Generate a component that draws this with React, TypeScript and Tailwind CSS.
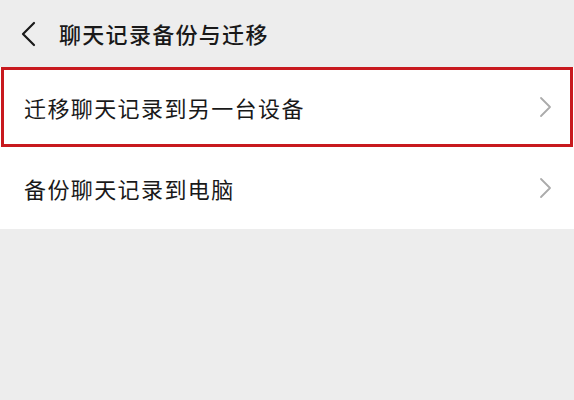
const rows = [
    { label: "迁移聊天记录到另一台设备", active: true },
    { label: "备份聊天记录到电脑", active: false },
];

function BackArrow() {
    return (
        <svg width="16" height="26" viewBox="0 0 16 26" className="ml-[20px]">
            <polyline points="14,2 3,13 14,24" fill="none" stroke="#1a1a1a" strokeWidth="2.2" strokeLinecap="round" strokeLinejoin="round" />
        </svg>
    );
}

function Arrow() {
    return (
        <svg width="14" height="22" viewBox="0 0 14 22">
            <polyline points="2,2 11,11 2,20" fill="none" stroke="#ababab" strokeWidth="1.8" strokeLinecap="round" strokeLinejoin="round" />
        </svg>
    );
}

export default function App() {
    return (
        <div className="w-[574px] h-[400px] bg-[#ededed] font-['Noto_Sans_CJK_SC',sans-serif] text-[#191919]">
            <header className="h-[67px] flex items-center">
                <BackArrow />
                <h1 className="ml-[23px] text-[22px] font-medium tracking-[1.3px]">聊天记录备份与迁移</h1>
            </header>
            <ul className="bg-white">
                {rows.map((row) => (
                    <li
                        key={row.label}
                        className={
                            row.active
                                ? "h-[80px] mx-[1px] border-[3px] border-[#c8191e] flex items-center justify-between pl-[20px] pr-[17px]"
                                : "h-[82px] flex items-center justify-between pl-[24px] pr-[21px]"
                        }
                    >
                        <span className="text-[22px] tracking-[1.4px]">{row.label}</span>
                        <Arrow />
                    </li>
                ))}
            </ul>
        </div>
    );
}
